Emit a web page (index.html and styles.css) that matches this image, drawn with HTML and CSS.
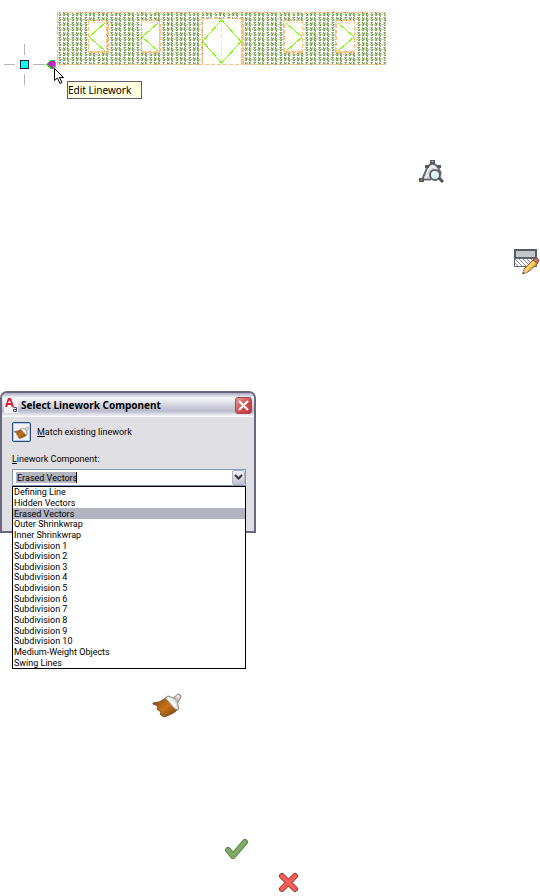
FILE: index.html
```
<!DOCTYPE html>
<html lang="en">
<head>
    <meta charset="UTF-8">
    <meta name="viewport" content="width=device-width, initial-scale=1.0">
    <title>Edit Linework</title>
    <link rel="stylesheet" href="styles.css">
</head>
<body>
    <main>
        <figure class="drawing">
            <svg width="400" height="110" viewBox="0 0 400 110" role="img" aria-label="Elevation with hatching and grips">
                <defs>
                    <!-- Brick hatch, drawn as broken vertical strokes -->
                    <pattern id="hatch" x="57" y="12" width="13" height="20" patternUnits="userSpaceOnUse">
                        <g shape-rendering="crispEdges" stroke-width="1" fill="none">
                            <path d="M0 2.500h13M0 7.500h13M0 12.500h13M0 17.500h13" stroke="#c9d6bb"/>
                            <path d="M2.500 0v20" stroke="#7ba351" stroke-dasharray="2 1 1 1"/>
                            <path d="M3.500 0v20" stroke="#7ba351" stroke-dasharray="1 1 2 1"/>
                            <path d="M1.500 0v20" stroke="#b5c9a0" stroke-dasharray="1 4"/>
                            <path d="M6.500 0v20" stroke="#7ba351" stroke-dasharray="2 1 1 1"/>
                            <path d="M7.500 1v19" stroke="#7ba351" stroke-dasharray="3 2"/>
                            <path d="M8.500 0v20" stroke="#b5c9a0" stroke-dasharray="2 3"/>
                            <path d="M10.500 0v20" stroke="#7ba351" stroke-dasharray="4 1"/>
                            <path d="M11.500 1v19" stroke="#7ba351" stroke-dasharray="1 1 2 1"/>
                        </g>
                    </pattern>
                </defs>
                <rect x="57" y="12" width="329" height="53" fill="url(#hatch)"/>
                <g shape-rendering="crispEdges" fill="none" stroke="#ffbd80" stroke-dasharray="4 2">
                    <rect x="57.5" y="12.5" width="328" height="52"/>
                    <g fill="#fff">
                        <rect x="88.5" y="20.5" width="18" height="32"/>
                        <rect x="141.5" y="20.5" width="18" height="32"/>
                        <rect x="202.5" y="18.5" width="40" height="46"/>
                        <rect x="283.5" y="20.5" width="19" height="32"/>
                        <rect x="335.5" y="20.5" width="19" height="32"/>
                    </g>
                    <path stroke-width="2" d="M89 52h19V21M142 52h18V21M302 52h-18V21M354 52h-18V21"/>
                    <path stroke-width="3" d="M242 18v47"/>
                    <path stroke="#ffdcc0" d="M91 22.5h14M144 22.5h14M287 22.5h14M339 22.5h14M221.5 22v40"/>
                </g>
                <g fill="none" stroke="#80ff00" shape-rendering="crispEdges">
                    <path d="M105 23 89 37l16 14M158 23l-16 14 16 14M286 23l16 14-16 14M338 23l16 14-16 14"/>
                    <path d="M221.5 20 241 41.500 221.500 63 202.500 41.500z"/>
                </g>
                <g shape-rendering="crispEdges">
                    <path d="M4 64.500h11M33 64.500h12M24.500 44v11M24.500 74v11" stroke="#b4b4b4"/>
                    <path d="m46 64 5-4h4l1 3v4l-3 2h-3z" fill="#00f000"/>
                    <path d="m47 64 4-3h4v5h-2v3h-1l-2-3z" fill="#c522c5"/>
                    <rect x="20.500" y="60.500" width="8" height="8" fill="#00ffff" stroke="#1f2932"/>
                </g>
                <path d="M54.500 68.500v12l3-2.500 2.500 5.500 2-1-2.500-5h4z" fill="#fff" stroke="#000"/>
            </svg>
            <figcaption class="tooltip">Edit Linework</figcaption>
        </figure>

        <div class="icon-row inspect">
            <svg width="28" height="28" viewBox="0 0 28 28" fill="none">
                <path d="m4 22 8-17h6l6 12v4z" fill="#ececf0"/>
                <path d="M4 22 9 10q5-8 11-1l3 7" stroke="#686b71" stroke-width="2"/>
                <path d="m7 18 9-8M9 20l9-9M10 14l5-4" stroke="#c4c5ca"/>
                <path d="M4 21.500h9" stroke="#686b71" stroke-width="2"/>
                <path d="M12 2h5v4h-5zM7 7h4v3H7zM19 7h4v3h-4zM1 20h5v4H1z" fill="#555960"/>
                <path d="M13.500 3.500h2M3 22h1" stroke="#b8c0d0"/>
                <circle cx="17" cy="17" r="5" fill="#dcefee" stroke="#5a6068" stroke-width="2"/>
                <path d="m21 20 4 4" stroke="#4e5055" stroke-width="3"/>
                <path d="M14 16q1-2 3-2" stroke="#fff" stroke-width="2"/>
            </svg>
        </div>

        <div class="icon-row edit-hatch">
            <svg width="28" height="28" viewBox="0 0 28 28" fill="none">
                <rect x="3" y="3" width="21" height="8" fill="#c3c6cb" stroke="#565d65" stroke-width="2"/>
                <rect x="2.500" y="11.500" width="22" height="8" fill="#fff" stroke="#656b73"/>
                <path d="m3 12 7 7M7 12l7 7M11 12l7 7M15 12l5 5M19 12l4 4M3 16l3 3" stroke="#8b8f97"/>
                <path d="m12 22 10-10 4 4-10 9-5 2z" fill="#f4b345" stroke="#8d5d36"/>
                <path d="m14 23 10-10" stroke="#ffdc72" stroke-width="2"/>
                <path d="m21 13 2-2q3-1 4 3l-2 2z" fill="#c8796b" stroke="#7d4440"/>
                <path d="m12 22 4 3-5 2z" fill="#e8c7a2"/>
                <path d="m11 25 2 1-3 1z" fill="#503b35"/>
            </svg>
        </div>

        <section class="dialog" role="dialog" aria-labelledby="dialog-title">
            <header class="title-bar">
                <svg width="14" height="16" viewBox="0 0 14 16">
                    <rect width="14" height="15" y="1" fill="#f4f4f7"/>
                    <path d="m1 10 3-9h3l3 9H8L7 8H4l-1 2zm3-4h3L5.500 3z" fill="#d92332" fill-rule="evenodd"/>
                    <path d="M9.500 10.500h3v4h-3v-2h3" fill="none" stroke="#4c4c60"/>
                </svg>
                <h1 id="dialog-title">Select Linework Component</h1>
                <button class="close" type="button" aria-label="Close">
                    <svg width="15" height="15" viewBox="0 0 15 15"><path d="m3 3 9 9m0-9-9 9" stroke="#fff" stroke-width="2"/></svg>
                </button>
            </header>
            <div class="dialog-body">
                <div class="match">
                    <button id="match" class="match-button" type="button" aria-labelledby="match-label">
                        <svg width="15" height="15" viewBox="0 0 30 30"><use href="#brush"/></svg>
                    </button>
                    <label id="match-label" for="match"><u>M</u>atch existing linework</label>
                </div>
                <label class="field-label" for="component"><u>L</u>inework Component:</label>
                <div class="combo">
                    <select id="component">
                        <option>Erased Vectors</option>
                    </select>
                    <span class="arrow">
                        <svg width="9" height="7" viewBox="0 0 9 7"><path d="m1 1 3.500 3.500L8 1" fill="none" stroke="#33343c" stroke-width="2"/></svg>
                    </span>
                    <ul class="options" role="listbox" aria-label="Linework Component">
                        <li role="option">Defining Line</li>
                        <li role="option">Hidden Vectors</li>
                        <li role="option" class="selected" aria-selected="true">Erased Vectors</li>
                        <li role="option">Outer Shrinkwrap</li>
                        <li role="option">Inner Shrinkwrap</li>
                        <li role="option">Subdivision 1</li>
                        <li role="option">Subdivision 2</li>
                        <li role="option">Subdivision 3</li>
                        <li role="option">Subdivision 4</li>
                        <li role="option">Subdivision 5</li>
                        <li role="option">Subdivision 6</li>
                        <li role="option">Subdivision 7</li>
                        <li role="option">Subdivision 8</li>
                        <li role="option">Subdivision 9</li>
                        <li role="option">Subdivision 10</li>
                        <li role="option">Medium-Weight Objects</li>
                        <li role="option">Swing Lines</li>
                    </ul>
                </div>
            </div>
        </section>

        <div class="icon-row brush">
            <svg width="30" height="30" viewBox="0 0 30 30">
                <defs>
                    <linearGradient id="bristles" x1="0" y1="0" x2="1" y2="1">
                        <stop offset="0" stop-color="#7d4410"/>
                        <stop offset=".5" stop-color="#c87317"/>
                        <stop offset="1" stop-color="#6c3a12"/>
                    </linearGradient>
                </defs>
                <g id="brush">
                    <path d="m20 9 6-5q3 0 3 3l-4 7z" fill="#d3c7bb" stroke="#8b8178"/>
                    <path d="M1 13q7 0 13-5l12 11q-3 4-9 6l-5 2q-2-1-4-3l1-2-4-3 1-3-5-2z" fill="url(#bristles)" stroke="#7a5330"/>
                    <path d="m13 8 3-2 6 2q5 4 4 8l1 3-2 1q-3-1-5-4-4-5-7-8z" fill="#e2e2e2" stroke="#8c8782"/>
                    <path d="m16 8 8 8" stroke="#fff" stroke-width="2"/>
                    <path d="m25 7 2-1" stroke="#fff" stroke-width="2"/>
                </g>
            </svg>
        </div>

        <div class="icon-row accept">
            <svg width="26" height="26" viewBox="0 0 26 26" fill="none" stroke-linecap="round" stroke-linejoin="round">
                <path d="m4 14 5 6L21 6" stroke="#63894f" stroke-width="6"/>
                <path d="m4 14 5 6L21 6" stroke="#7eac67" stroke-width="4"/>
            </svg>
        </div>

        <div class="icon-row cancel">
            <svg width="24" height="24" viewBox="0 0 24 24" fill="none" stroke-linecap="round">
                <path d="m5 5 13 13m0-13L5 18" stroke="#9e3935" stroke-width="6"/>
                <path d="m5 5 13 13m0-13L5 18" stroke="#f85e56" stroke-width="4"/>
            </svg>
        </div>
    </main>
</body>
</html>
```

FILE: styles.css
```
* {
    margin: 0;
    padding: 0;
    box-sizing: border-box;
}

:root {
    --frame: #68677f;
    --face: #e0dfe4;
    --highlight: #b2b4c0;
}

body {
    background: #fff;
    color: #000;
    font-family: Roboto, "Noto Sans", sans-serif;
    font-size: 9px;
}

svg {
    display: block;
    flex-shrink: 0;
}

.drawing {
    position: relative;
}

.tooltip {
    position: absolute;
    top: 81px;
    left: 67px;
    width: 75px;
    height: 18px;
    border: 1px solid #5c5c70;
    background: #ffffe1;
    font-family: "Noto Sans", sans-serif;
    font-size: 10px;
    line-height: 16px;
}

.icon-row {
    display: flex;
}

.inspect {
    margin-top: 48px;
    padding-left: 418px;
}

.edit-hatch {
    justify-content: flex-end;
    margin-top: 61px;
}

/* Dialog window */
.dialog {
    width: 256px;
    margin-top: 116px;
    border: 2px solid var(--frame);
    border-radius: 7px 7px 0 0;
    background: var(--face);
}

.title-bar {
    display: flex;
    align-items: center;
    gap: 3px;
    height: 24px;
    padding: 0 2px;
    border-radius: 5px 5px 0 0;
    background: linear-gradient(#a9aac2, #f7f7fa 20%, #d6d6e2 50%, #b9bacd 75%, #fff);
}

.title-bar h1 {
    flex: 1;
    font-family: "Noto Sans", sans-serif;
    font-size: 10px;
    font-weight: 700;
    line-height: 16px;
}

.close {
    display: flex;
    align-items: center;
    justify-content: center;
    width: 17px;
    height: 17px;
    border: 1px solid #a34a52;
    border-radius: 3px;
    background: linear-gradient(135deg, #e69a98, #cf4b4b 60%, #b83840);
}

.dialog-body {
    padding: 5px 8px 45px 10px;
}

.match {
    display: flex;
    align-items: center;
    gap: 6px;
}

.match-button {
    display: flex;
    align-items: center;
    justify-content: center;
    width: 19px;
    height: 20px;
    border: 1px solid #264a7c;
    border-radius: 2px;
    background: #f1f1f6;
    box-shadow: inset 0 0 0 1px #b9cbed;
}

.field-label {
    display: block;
    margin: 11px 0 4px;
    line-height: 12px;
}

.combo {
    display: flex;
    position: relative;
    height: 17px;
    border: 1px solid #7f9db9;
    background: #fff;
}

/* The chosen text is marked, with the caret after it */
.combo select {
    flex: 1;
    appearance: none;
    border: none;
    padding-left: 4px;
    background:
        linear-gradient(#000, #000) 63px 2px / 1px 11px no-repeat,
        linear-gradient(var(--highlight), var(--highlight)) 3px 2px / 60px 11px no-repeat;
    color: #000;
    font: inherit;
}

.arrow {
    display: flex;
    align-items: center;
    justify-content: center;
    width: 13px;
    border: 1px solid #b0b1c2;
    border-radius: 2px;
    background: linear-gradient(#f0f0f5, #c3c4d3);
}

.options {
    display: flex;
    flex-direction: column;
    position: absolute;
    top: 16px;
    left: -1px;
    right: -1px;
    height: 183px;
    border: 1px solid #000;
    background: #fff;
    list-style: none;
}

.options li {
    display: flex;
    align-items: center;
    flex: 1;
    min-height: 0;
    padding-left: 1px;
    line-height: 10px;
}

.options .selected {
    background: var(--highlight);
}

.brush {
    margin-top: 157px;
    padding-left: 152px;
}

.accept {
    margin-top: 116px;
    padding-left: 224px;
}

.cancel {
    margin-top: 9px;
    padding-left: 277px;
}
```
